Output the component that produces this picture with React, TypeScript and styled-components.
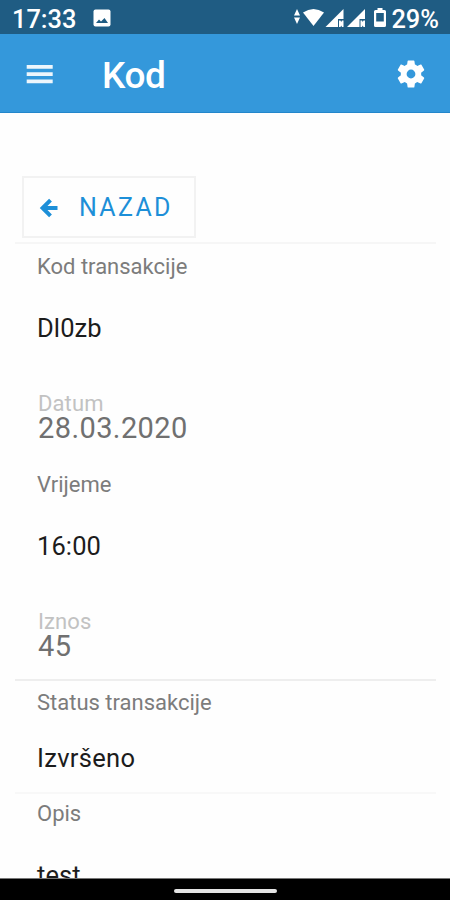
import React from "react";
import styled, { createGlobalStyle } from "styled-components";

const GlobalStyle = createGlobalStyle`
  * { box-sizing: border-box; }
  html, body { margin: 0; padding: 0; background: #fefefe; }
  body { font-family: Roboto, "Noto Sans", sans-serif; overflow: hidden; }
`;

const Screen = styled.div`
  width: 450px;
  height: 900px;
  display: flex;
  flex-direction: column;
  background: #fefefe;
  overflow: hidden;
`;

const StatusBar = styled.div`
  flex: 0 0 34px;
  display: flex;
  align-items: center;
  padding: 4px 11px 0 12px;
  background: #1f5c83;
  color: #fff;
`;

const StatusText = styled.span`
  font-size: 25.4px;
  line-height: 30px;
  font-weight: 500;
  white-space: nowrap;
`;

const PictureIcon = styled.svg`
  width: 18px;
  height: 18px;
  margin: 0 0 3px 17px;
`;

const StatusIcons = styled.svg`
  width: 96px;
  height: 26px;
  margin: 0 3px 3px auto;
`;

const AppBar = styled.header`
  flex: 0 0 79px;
  display: flex;
  align-items: center;
  padding: 4px 23px 0 26px;
  background: #3498db;
  border-bottom: 1px solid #2386cb;
`;

const MenuIcon = styled.svg`
  width: 27px;
  height: 20px;
  margin-bottom: 2px;
`;

const Title = styled.h1`
  margin: 0 auto 0 49px;
  padding-top: 2px;
  font-size: 37px;
  line-height: 44px;
  font-weight: 500;
  letter-spacing: -0.4px;
  color: #fff;
`;

const GearIcon = styled.svg`
  width: 34px;
  height: 34px;
  margin: 0 -1px 3px 0;
`;

const Content = styled.main`
  flex: 1;
  min-height: 0;
  overflow: hidden;
  padding: 63px 14px 0 15px;
`;

const BackButton = styled.button`
  display: flex;
  align-items: center;
  width: 174px;
  height: 62px;
  margin: 0 0 4px 7px;
  padding: 1px 0 0 15px;
  border: 2px solid #f2f2f2;
  background: #fefefe;
  color: #1d8fd8;
  font-family: inherit;
  font-size: 25px;
  letter-spacing: 2.3px;
`;

const BackArrow = styled.svg`
  width: 19px;
  height: 20px;
  margin-right: 21px;
`;

const Section = styled.section<{ $height: number; $line: string; $top: number }>`
  height: ${(p) => p.$height}px;
  border-top: 2px solid ${(p) => p.$line};
  padding: ${(p) => p.$top}px 0 0 22px;
`;

const Field = styled.div<{ $height: number; $gap: number; $inset?: number }>`
  display: flex;
  flex-direction: column;
  gap: ${(p) => p.$gap}px;
  height: ${(p) => p.$height}px;
  padding-left: ${(p) => p.$inset ?? 0}px;
`;

const Label = styled.span<{ $faded?: boolean }>`
  font-size: 22px;
  line-height: 24px;
  letter-spacing: ${(p) => (p.$faded ? 0.1 : 0)}px;
  color: ${(p) => (p.$faded ? "#c2c2c2" : "#7c7c7c")};
`;

const Value = styled.span<{ $muted?: boolean; $spacing?: number }>`
  font-size: ${(p) => (p.$muted ? 29 : 25.5)}px;
  line-height: 24px;
  letter-spacing: ${(p) => p.$spacing ?? 0.1}px;
  color: ${(p) => (p.$muted ? "#707070" : "#1c1c1c")};
`;

const NavBar = styled.div`
  flex: 0 0 22px;
  display: flex;
  justify-content: center;
  padding-top: 10px;
  background: #000;
  border-top: 1px solid #777;
`;

const HomeHandle = styled.div`
  width: 103px;
  height: 4px;
  border-radius: 2px;
  background: #e4e4e4;
`;

export default function App() {
  return (
    <Screen>
      <GlobalStyle />
      <StatusBar>
        <StatusText>17:33</StatusText>
        <PictureIcon viewBox="0 0 18 18">
          <rect x="0.5" y="0.5" width="17" height="17" rx="2" fill="#fff" />
          <path d="M3 14 L6 10.5 L8 12.5 L11.5 9 L15 14Z" fill="#1f5c83" />
        </PictureIcon>
        <StatusIcons viewBox="0 0 96 26" fill="#fff">
          <path d="M5 4 L8 10.5 H2Z M5 19 L2 12.5 H8Z" />
          <path d="M11 7.5 Q21.5 0.5 32 7.5 L21.5 21Z" />
          <path d="M51.5 4 V14 H46 V22 H33.5Z M47 15.5 H48.5 L49.2 17 L50 15.5 H51.5 V22 H50 L49.2 20.5 L48.5 22 H47Z" />
          <path d="M73 4 V14 H67.5 V22 H55Z M68.5 15.5 H70 L70.7 17 L71.5 15.5 H73 V22 H71.5 L70.7 20.5 L70 22 H68.5Z" />
          <path fillRule="evenodd" d="M85.5 3 H90.5 V5 H92.5 Q94 5 94 6.5 V20.5 Q94 22 92.5 22 H83.5 Q82 22 82 20.5 V6.5 Q82 5 83.5 5 H85.5Z M84.2 8 V16.5 H91.8 V8Z" />
        </StatusIcons>
        <StatusText>29%</StatusText>
      </StatusBar>

      <AppBar>
        <MenuIcon viewBox="0 0 27 20" fill="#edf6fc">
          <path d="M0.7 1h26v3.8h-26z M0.7 8.2h26v3.8h-26z M0.7 15.4h26v3.8h-26z" />
        </MenuIcon>
        <Title>Kod</Title>
        <GearIcon viewBox="0 0 24 24" fill="#fff">
          <path d="M19.14 12.94c.04-.3.06-.61.06-.94 0-.32-.02-.64-.07-.94l2.03-1.58c.18-.14.23-.41.12-.61l-1.92-3.32c-.12-.22-.37-.29-.59-.22l-2.39.96c-.5-.38-1.03-.7-1.62-.94l-.36-2.54c-.04-.24-.24-.41-.48-.41h-3.84c-.24 0-.43.17-.47.41l-.36 2.54c-.59.24-1.13.57-1.62.94l-2.39-.96c-.22-.08-.47 0-.59.22L2.74 8.87c-.12.21-.08.47.12.61l2.03 1.58c-.05.3-.09.63-.09.94s.02.64.07.94l-2.03 1.58c-.18.14-.23.41-.12.61l1.92 3.32c.12.22.37.29.59.22l2.39-.96c.5.38 1.03.7 1.62.94l.36 2.54c.05.24.24.41.48.41h3.84c.24 0 .44-.17.47-.41l.36-2.54c.59-.24 1.13-.56 1.62-.94l2.39.96c.22.08.47 0 .59-.22l1.92-3.32c.12-.22.07-.47-.12-.61l-2.01-1.58zM12 15.1a3.1 3.1 0 1 1 0-6.2 3.1 3.1 0 0 1 0 6.2z" />
        </GearIcon>
      </AppBar>

      <Content>
        <BackButton>
          <BackArrow viewBox="0 0 19 20" fill="none" stroke="#1d8fd8" strokeWidth="4">
            <path d="M3 10 H18.5 M11.5 2.2 L3.6 10 L11.5 17.8" />
          </BackArrow>
          NAZAD
        </BackButton>
        <Section $height={437} $line="#f6f6f6" $top={11}>
          <Field $height={137} $gap={37}>
            <Label>Kod transakcije</Label>
            <Value>Dl0zb</Value>
          </Field>
          <Field $height={81} $gap={0} $inset={1}>
            <Label $faded>Datum</Label>
            <Value $muted $spacing={0.4}>28.03.2020</Value>
          </Field>
          <Field $height={137} $gap={37}>
            <Label>Vrijeme</Label>
            <Value>16:00</Value>
          </Field>
          <Field $height={60} $gap={0} $inset={1}>
            <Label $faded>Iznos</Label>
            <Value $muted $spacing={0.4}>45</Value>
          </Field>
        </Section>
        <Section $height={113} $line="#eeeeee" $top={10}>
          <Field $height={90} $gap={31}>
            <Label>Status transakcije</Label>
            <Value $spacing={0.3}>Izvršeno</Value>
          </Field>
        </Section>
        <Section $height={113} $line="#f8f8f8" $top={8}>
          <Field $height={90} $gap={37}>
            <Label>Opis</Label>
            <Value>test</Value>
          </Field>
        </Section>
      </Content>

      <NavBar>
        <HomeHandle />
      </NavBar>
    </Screen>
  );
}
